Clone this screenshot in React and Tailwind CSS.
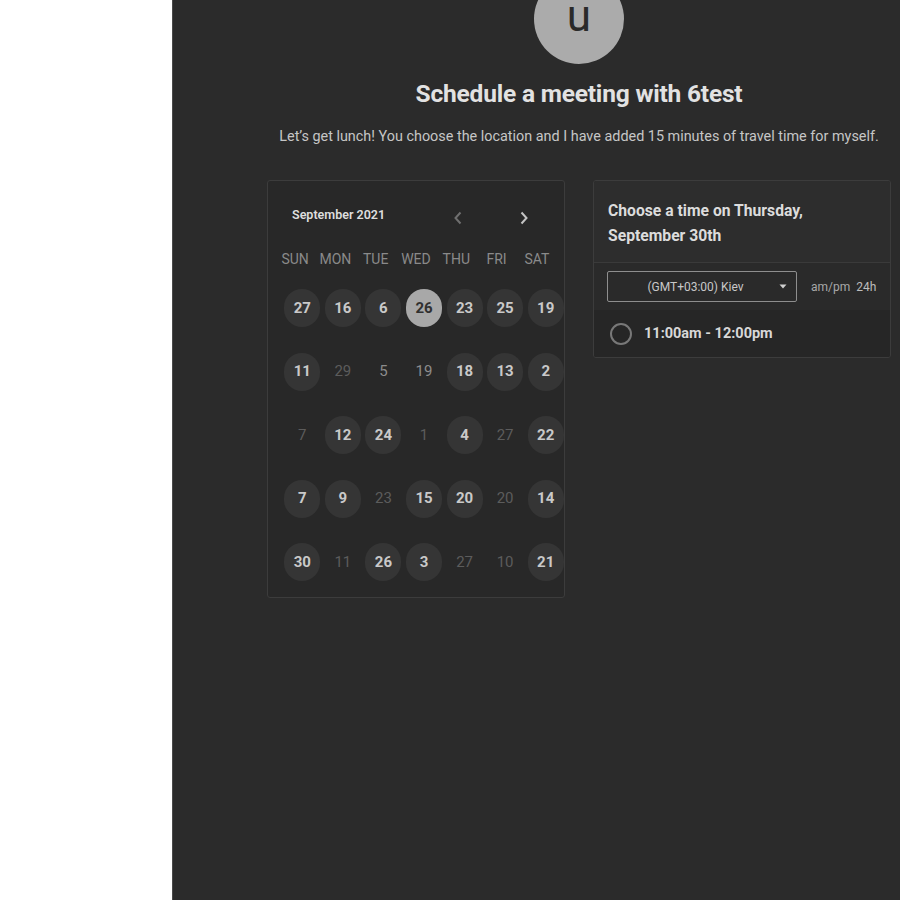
const rows = [
  [["27", 1], ["16", 1], ["6", 1], ["26", 2], ["23", 1], ["25", 1], ["19", 1]],
  [["11", 1], ["29", 0], ["5", 3], ["19", 3], ["18", 1], ["13", 1], ["2", 1]],
  [["7", 0], ["12", 1], ["24", 1], ["1", 0], ["4", 1], ["27", 0], ["22", 1]],
  [["7", 1], ["9", 1], ["23", 0], ["15", 1], ["20", 1], ["20", 0], ["14", 1]],
  [["30", 1], ["11", 0], ["26", 1], ["3", 1], ["27", 0], ["10", 0], ["21", 1]],
];

const weekdays = ["SUN", "MON", "TUE", "WED", "THU", "FRI", "SAT"];

function Day({ label, kind }) {
  // kind: 0 = indisponible, 1 = disponible, 2 = sélectionné, 3 = indisponible (plus clair)
  if (kind === 2) {
    return (
      <div className="w-[36px] h-[38px] rounded-full bg-[#a8a8a8] flex items-center justify-center text-[15px] font-bold text-[#303030]">
        {label}
      </div>
    );
  }
  if (kind === 1) {
    return (
      <div className="w-[36px] h-[38px] rounded-full bg-[#353535] flex items-center justify-center text-[15px] font-bold text-[#c9c9c9]">
        {label}
      </div>
    );
  }
  return (
    <div
      className={
        "w-[36px] h-[38px] flex items-center justify-center text-[15px] " +
        (kind === 3 ? "text-[#8c8c8c]" : "text-[#5c5c5c]")
      }
    >
      {label}
    </div>
  );
}

export default function App() {
  return (
    <div className="flex w-[900px] h-[900px] overflow-hidden bg-white font-['Roboto','Liberation_Sans',sans-serif]">
      {/* colonne blanche */}
      <div className="w-[172px] shrink-0 bg-white" />

      {/* panneau sombre */}
      <div className="flex-1 bg-[#2b2b2b] border-l border-[#4a4a4a]">
        <div className="ml-[94px] w-[624px] flex flex-col items-center">
          {/* avatar */}
          <div className="mt-[-26px] w-[90px] h-[90px] rounded-full bg-[#ababab] flex items-center justify-center">
            <span className="text-[44px] leading-none text-[#2a2a2a] -mt-[6px]">u</span>
          </div>

          <h1 className="mt-[15px] text-[24.5px] leading-[30px] font-bold text-[#e2e2e2] tracking-[-0.2px] whitespace-nowrap">
            Schedule a meeting with 6test
          </h1>

          <p className="mt-[18px] text-[14.4px] leading-[20px] text-[#c6c6c6] whitespace-nowrap">
            Let’s get lunch! You choose the location and I have added 15 minutes of travel time for myself.
          </p>

          {/* cartes */}
          <div className="mt-[33px] w-full flex items-start gap-[28px]">
            {/* calendrier */}
            <div className="w-[298px] h-[418px] border border-[#3c3c3c] rounded-[3px] bg-[#282828]">
              <div className="flex items-center h-[66px] pt-[2px]">
                <div className="ml-[24px] w-[164px] text-[12.5px] font-semibold text-[#dedede]">September 2021</div>
                <svg className="-ml-[3px] mt-[6px]" width="10" height="14" viewBox="0 0 10 14">
                  <path d="M7.5 1.5 L2.5 7 L7.5 12.5" fill="none" stroke="#6f6f6f" strokeWidth="2" />
                </svg>
                <svg className="ml-[56px] mt-[6px]" width="10" height="14" viewBox="0 0 10 14">
                  <path d="M2.5 1.5 L7.5 7 L2.5 12.5" fill="none" stroke="#c4c4c4" strokeWidth="2" />
                </svg>
              </div>

              <div className="ml-[7px] grid grid-cols-7 w-[282px] h-[24px] items-center">
                {weekdays.map((d) => (
                  <div key={d} className="text-center text-[14px] text-[#8a8a8a]">
                    {d}
                  </div>
                ))}
              </div>

              <div className="ml-[14px] mt-[18px] w-[284px] flex flex-col gap-[25.5px]">
                {rows.map((row, i) => (
                  <div key={i} className="grid grid-cols-7">
                    {row.map(([label, kind], j) => (
                      <div key={j} className="flex justify-center">
                        <Day label={label} kind={kind} />
                      </div>
                    ))}
                  </div>
                ))}
              </div>
            </div>

            {/* horaires */}
            <div className="w-[298px] border border-[#3c3c3c] rounded-[3px] bg-[#2a2a2a] overflow-hidden">
              <div className="pl-[14px] pt-[17px] pb-[14px] text-[15.7px] leading-[25px] font-bold text-[#dcdcdc] bg-[#2d2d2d] border-b border-[#3a3a3a]">
                Choose a time on Thursday,
                <br />
                September 30th
              </div>

              <div className="h-[47px] flex items-center pl-[13px]">
                <div className="w-[190px] h-[31px] border border-[#8e8e8e] rounded-[2px] flex items-center">
                  <span className="flex-1 text-center text-[12px] text-[#c8c8c8] pl-[4px]">(GMT+03:00) Kiev</span>
                  <svg className="mr-[9px]" width="8" height="5" viewBox="0 0 8 5">
                    <path d="M0.5 0.5 L7.5 0.5 L4 4.5 Z" fill="#d0d0d0" />
                  </svg>
                </div>
                <span className="ml-[14px] text-[12px] text-[#a8a8a8]">am/pm</span>
                <span className="ml-[6px] text-[12px] text-[#bdbdbd]">24h</span>
              </div>

              <div className="h-[47px] flex items-center pl-[16px] bg-[#262626]">
                <div className="w-[22px] h-[22px] rounded-full border-2 border-[#787878]" />
                <span className="ml-[12px] text-[14.5px] font-bold text-[#d8d8d8]">11:00am - 12:00pm</span>
              </div>
            </div>
          </div>
        </div>
      </div>
    </div>
  );
}
